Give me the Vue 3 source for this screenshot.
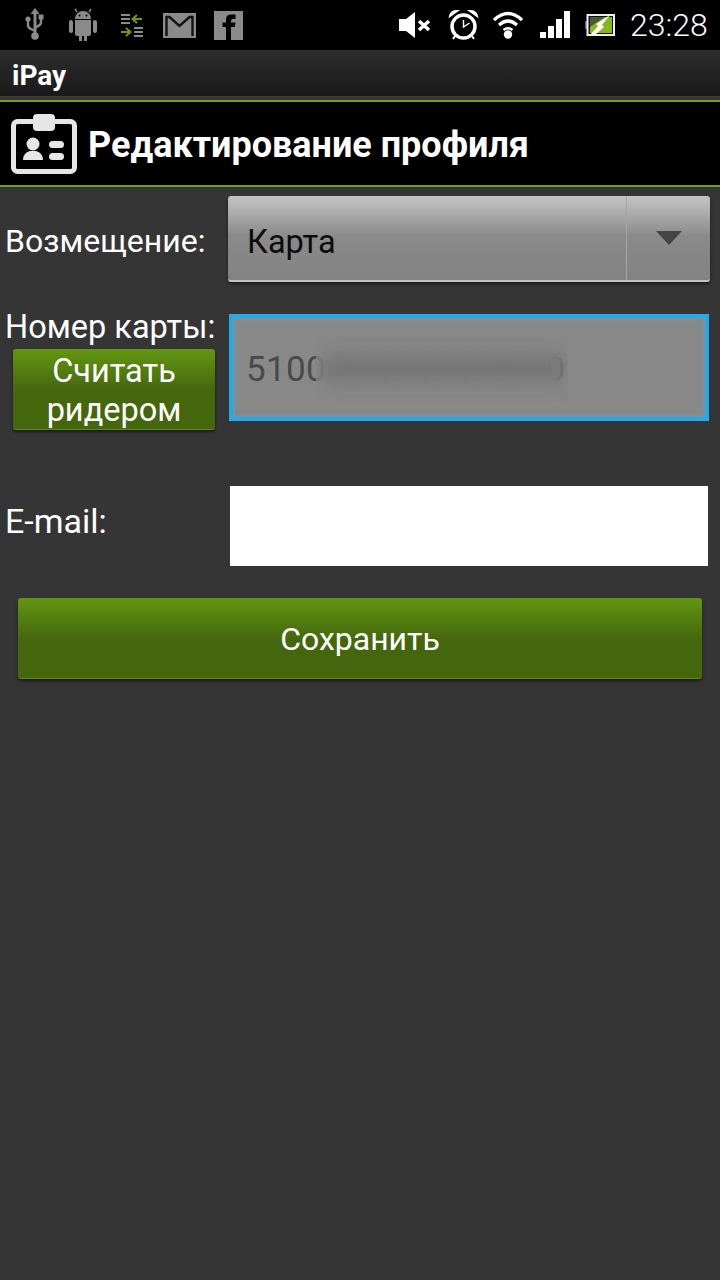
<script setup>
const pageTitle = 'Редактирование профиля'
</script>

<template>
  <div class="screen">
    <!-- status bar -->
    <div class="statusBar">
      <div class="statusLeft">
        <span class="slot">
          <svg width="20" height="34" viewBox="0 0 20 34">
            <path d="M10 0l4.500 6h-3v20h-3v-20h-3z" fill="#8a8a8a" />
            <circle cx="10" cy="28" r="3.800" fill="#8a8a8a" />
            <path d="M3 11v6q0 3 3 4l4 2M16 10v4q0 3-3 4l-3 2" fill="none" stroke="#8a8a8a" stroke-width="2.400" />
            <circle cx="3" cy="11" r="2.600" fill="#8a8a8a" />
            <rect x="13.500" y="6.500" width="5" height="5" fill="#8a8a8a" />
          </svg>
        </span>
        <span class="slot">
          <svg width="30" height="34" viewBox="0 0 30 34" fill="#8a8a8a">
            <path d="M7 11a8 8 0 0 1 16 0z" />
            <path d="M9 4l-2-3M21 4l2-3" stroke="#8a8a8a" stroke-width="1.500" />
            <path d="M7 12h16v14q0 2-2 2h-2v5h-3v-5h-2v5h-3v-5h-2q-2 0-2-2z" />
            <rect x="1" y="12" width="4" height="13" rx="2" />
            <rect x="25" y="12" width="4" height="13" rx="2" />
            <circle cx="11.500" cy="7.500" r="1" fill="#000" />
            <circle cx="18.500" cy="7.500" r="1" fill="#000" />
          </svg>
        </span>
        <span class="slot">
          <svg width="24" height="24" viewBox="0 0 24 24">
            <path d="M1 2h9M1 6h9M1 10h9M14 15h9M14 19h9M14 23h9" stroke="#8a8a8a" stroke-width="2" />
            <path d="M22 6h-9M17 2l-4.500 4 4.500 4M1 19h9M6 15l4.500 4-4.500 4" fill="none" stroke="#6b9a10" stroke-width="2" />
          </svg>
        </span>
        <span class="slot">
          <svg width="33" height="25" viewBox="0 0 33 25">
            <rect width="33" height="25" fill="#8a8a8a" />
            <path d="M3.500 23v-19h3l10 9 10-9h3v19" fill="none" stroke="#111" stroke-width="2.400" />
          </svg>
        </span>
        <span class="slot">
          <svg width="29" height="29" viewBox="0 0 29 29">
            <rect width="29" height="29" fill="#8a8a8a" />
            <path d="M12 29v-13h-3.500v-4.500h3.500v-3q0-5 5-5h4.500v4.500h-2.500q-2 0-2 2v1.500h4.500l-.7 4.500h-3.800v13z" fill="#000" />
          </svg>
        </span>
      </div>
      <div class="statusRight">
        <svg class="mute" width="33" height="26" viewBox="0 0 33 26">
          <path d="M0 7h7l9-7v26l-9-7h-7z" fill="#fff" />
          <path d="M20 9l10 9M30 9l-10 9" stroke="#fff" stroke-width="3.500" />
        </svg>
        <svg class="alarm" width="31" height="32" viewBox="0 0 31 32">
          <circle cx="15.500" cy="17.500" r="11.500" fill="none" stroke="#fff" stroke-width="3.500" />
          <path d="M15.500 11v7l6-4" fill="none" stroke="#fff" stroke-width="1.400" />
          <path d="M2 7q1-5 7-5zM29 7q-1-5-7-5zM7 27l-2 3M24 27l2 3" fill="#fff" stroke="#fff" stroke-width="2" />
        </svg>
        <svg class="wifi" width="30" height="28" viewBox="0 0 30 28">
          <path d="M1 9q14-13 28 0M6 14q9-8 18 0" fill="none" stroke="#fff" stroke-width="3.200" />
          <path d="M10.500 19q4.500-3.500 9 0" fill="none" stroke="#fff" stroke-width="2.500" />
          <circle cx="15" cy="23.500" r="4.200" fill="#fff" />
        </svg>
        <svg class="signal" width="30" height="28" viewBox="0 0 30 28" fill="#fff">
          <rect x="0" y="21" width="6" height="6" />
          <rect x="8" y="15" width="6" height="12" />
          <rect x="16" y="8" width="6" height="19" />
          <rect x="24" y="0" width="6" height="27" />
        </svg>
        <svg class="battery" width="30" height="22" viewBox="0 0 30 22">
          <rect x="0" y="7" width="2" height="8" fill="#666" />
          <rect x="2.500" y="1" width="26.500" height="20" fill="#111" stroke="#eee" stroke-width="2" />
          <rect x="5" y="3" width="22" height="16" fill="#86b81c" />
          <path d="M5 3h15l-15 10z" fill="#4b5a33" />
          <path d="M5 21l8-9-2-2 14-9-8 10 2 2-9 8z" fill="#fff" />
        </svg>
        <span class="clock">23:28</span>
      </div>
    </div>

    <!-- app title -->
    <div class="appBar">iPay</div>
    <div class="header">
      <svg class="cardIcon" width="66" height="60" viewBox="0 0 66 60">
        <rect x="2.500" y="7.500" width="61" height="50" rx="4" fill="#000" stroke="#e6e6e6" stroke-width="5" />
        <rect x="22" y="0" width="22" height="17" rx="4" fill="#e6e6e6" />
        <circle cx="22" cy="30" r="6.500" fill="#e6e6e6" />
        <path d="M12 46q0-7 7-9h6q7 2 7 9z" fill="#e6e6e6" />
        <rect x="38" y="27" width="15" height="7" rx="3.500" fill="#e6e6e6" />
        <rect x="38" y="39" width="15" height="7" rx="3.500" fill="#e6e6e6" />
      </svg>
      <h1 class="title">{{ pageTitle }}</h1>
    </div>

    <!-- form -->
    <div class="form">
      <div class="row rowCenter">
        <label class="label labelPay">Возмещение:</label>
        <div class="spinner">
          <span class="spinnerText">Карта</span>
          <span class="spinnerArrow"><i class="triangle"></i></span>
        </div>
      </div>

      <div class="row rowCard">
        <div class="labelCol">
          <label class="label">Номер карты:</label>
          <button class="btn btnReader">Считать<br />ридером</button>
        </div>
        <div class="cardInput">
          <span>5100000000000000</span>
          <!-- номер карты замазан, как на исходном снимке -->
          <i class="cardBlur"></i>
        </div>
      </div>

      <div class="row rowCenter rowMail">
        <label class="label labelMail">E-mail:</label>
        <div class="mailInput"></div>
      </div>

      <button class="btn btnSave">Сохранить</button>
    </div>
  </div>
</template>

<style scoped>
.screen {
  width: 720px;
  height: 1280px;
  background: #353535;
  font-family: Roboto, "Noto Sans", sans-serif;
  color: #fff;
  overflow: hidden;
}

.statusBar {
  height: 50px;
  background: #000;
  display: flex;
  justify-content: space-between;
  align-items: center;
}
.statusLeft {
  display: flex;
  align-items: center;
  padding-left: 11px;
}
.slot {
  width: 48.250px;
  display: flex;
  justify-content: center;
}
.statusRight {
  display: flex;
  align-items: center;
  padding-right: 12px;
}
.mute {
  margin-right: 16px;
}
.alarm {
  margin-right: 14px;
}
.wifi {
  margin-right: 17px;
}
.signal,
.battery {
  margin-right: 15px;
}
.clock {
  font-weight: 300;
  font-size: 32px;
  line-height: 50px;
  width: 78px;
  white-space: nowrap;
}

.appBar {
  height: 47px;
  box-sizing: border-box;
  padding-left: 12px;
  background: linear-gradient(#2e2e2e, #191919);
  border-bottom: 1px solid #3d3d3d;
  font-size: 28px;
  font-weight: 700;
  line-height: 52px;
}
.header {
  height: 87px;
  box-sizing: border-box;
  margin-top: 3px;
  background: #000;
  border-top: 2px solid #6aa011;
  border-bottom: 2px solid #6aa011;
  display: flex;
  align-items: center;
  padding-left: 11px;
  gap: 11px;
}
.cardIcon {
  flex: none;
}
.title {
  margin: 2px 0 0;
  font-size: 36px;
  font-weight: 700;
  white-space: nowrap;
}

.form {
  padding-top: 9px;
}
.row {
  display: flex;
}
.rowCenter {
  align-items: center;
}
.label {
  display: block;
  box-sizing: border-box;
  width: 228px;
  flex: none;
  padding-left: 5px;
  font-size: 32.500px;
  line-height: 34px;
  white-space: nowrap;
}
.labelPay {
  padding-top: 4px;
  font-size: 32px;
}

.spinner {
  width: 482px;
  height: 86px;
  box-sizing: border-box;
  display: flex;
  align-items: stretch;
  border-radius: 3px;
  border-bottom: 2px solid #c4c4c4;
  background: linear-gradient(#c4c4c4, #8a8a8a 48%, #828282);
  box-shadow: 0 2px 3px rgba(0, 0, 0, 0.5);
}
.spinnerText {
  flex: 1;
  padding-left: 19px;
  color: #0c0c0c;
  font-size: 32.500px;
  line-height: 92px;
}
.spinnerArrow {
  width: 83px;
  border-left: 1px solid #a4a4a4;
  display: flex;
  align-items: center;
  justify-content: center;
}
.triangle {
  width: 0;
  height: 0;
  border-left: 13px solid transparent;
  border-right: 13px solid transparent;
  border-top: 14px solid #444;
}

.rowCard {
  margin-top: 28px;
  align-items: flex-start;
}
.labelCol {
  width: 229px;
  flex: none;
}
.btn {
  display: block;
  box-sizing: border-box;
  border: 0;
  color: #fff;
  font-family: inherit;
  text-align: center;
  border-radius: 3px;
  background: linear-gradient(#639612, #44670e 52%, #44670e);
  border-bottom: 1px solid #5d8c12;
  box-shadow: 0 2px 3px rgba(0, 0, 0, 0.5);
}
.btnReader {
  width: 202px;
  height: 81px;
  margin: 5px 0 0 13px;
  padding: 3px 0 0;
  font-size: 32.500px;
  line-height: 39px;
}
.cardInput {
  position: relative;
  width: 480px;
  height: 107px;
  box-sizing: border-box;
  margin-top: 4px;
  border: 4px solid #25aae6;
  background: #888;
  box-shadow: inset 0 0 4px #5fa6cc;
  display: flex;
  align-items: center;
  padding: 4px 0 0 13px;
  font-size: 35px;
  letter-spacing: 0.300px;
  color: #4a4a4a;
}
/* поверх текста: размытие и светлый край слева */
.cardBlur {
  position: absolute;
  left: 83px;
  top: 18px;
  width: 252px;
  height: 66px;
  backdrop-filter: blur(9px);
  background: linear-gradient(90deg, rgba(136, 136, 136, 0.6) 0, rgba(136, 136, 136, 0.15) 20px, rgba(136, 136, 136, 0.15) 100%);
}

.rowMail {
  margin-top: 56px;
}
.labelMail {
  width: 230px;
  padding-bottom: 10px;
  font-size: 34px;
}
.mailInput {
  width: 478px;
  height: 80px;
  background: #fff;
}
.btnSave {
  width: 684px;
  height: 81px;
  margin: 32px 0 0 18px;
  padding: 1px 0 0;
  font-size: 32px;
}
</style>
